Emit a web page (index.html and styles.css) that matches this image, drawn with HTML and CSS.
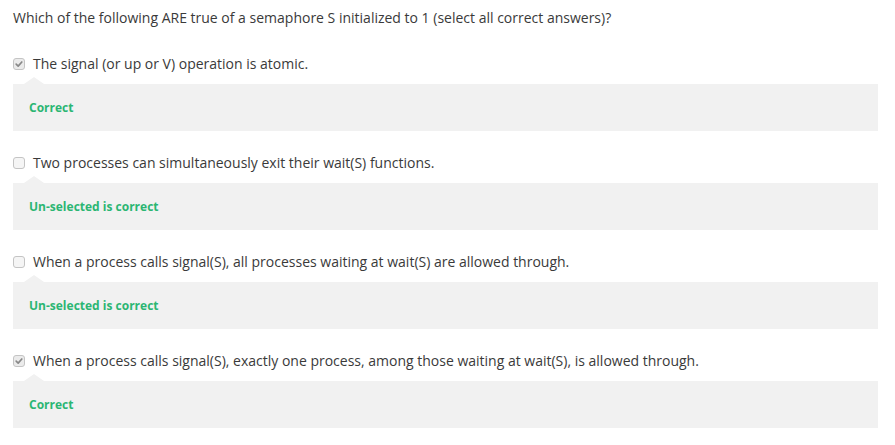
FILE: index.html
```html
<!DOCTYPE html>
<html>
<head>
<meta charset="utf-8">
<link rel="stylesheet" href="styles.css">
</head>
<body>
<div class="quiz">
  <div class="question">Which of the following ARE true of a semaphore S initialized to 1 (select all correct answers)?</div>

  <div class="option">
    <div class="choice">
      <span class="cb checked"><svg viewBox="0 0 12 12" width="12" height="12"><path d="M2.6 6.2 L5 8.5 L9.4 3.6" fill="none" stroke="#888888" stroke-width="2" stroke-linecap="round" stroke-linejoin="round"/></svg></span>
      <span class="label">The signal (or up or V) operation is atomic.</span>
    </div>
    <div class="feedback"><span>Correct</span></div>
  </div>

  <div class="option">
    <div class="choice">
      <span class="cb"></span>
      <span class="label">Two processes can simultaneously exit their wait(S) functions.</span>
    </div>
    <div class="feedback"><span>Un-selected is correct</span></div>
  </div>

  <div class="option">
    <div class="choice">
      <span class="cb"></span>
      <span class="label">When a process calls signal(S), all processes waiting at wait(S) are allowed through.</span>
    </div>
    <div class="feedback"><span>Un-selected is correct</span></div>
  </div>

  <div class="option">
    <div class="choice">
      <span class="cb checked"><svg viewBox="0 0 12 12" width="12" height="12"><path d="M2.6 6.2 L5 8.5 L9.4 3.6" fill="none" stroke="#888888" stroke-width="2" stroke-linecap="round" stroke-linejoin="round"/></svg></span>
      <span class="label">When a process calls signal(S), exactly one process, among those waiting at wait(S), is allowed through.</span>
    </div>
    <div class="feedback"><span>Correct</span></div>
  </div>
</div>
</body>
</html>
```

FILE: styles.css
```css
html, body {
  margin: 0;
  padding: 0;
  background: #ffffff;
}
body {
  font-family: "Open Sans", "Liberation Sans", sans-serif;
  color: #3a3a3a;
  font-size: 14px;
  line-height: 20px;
}
.quiz {
  padding: 8px 17px 0 13px;
}
.question {
  margin-bottom: 26px;
}
.option {
  margin-bottom: 22px;
}
.choice {
  display: flex;
  align-items: center;
  height: 20px;
}
.cb {
  box-sizing: border-box;
  width: 12px;
  height: 12px;
  border: 1px solid #c4c4c4;
  border-radius: 3px;
  background: #f5f5f5;
  margin-right: 8px;
  display: flex;
  align-items: center;
  justify-content: center;
  flex: none;
}
.cb svg {
  display: block;
  width: 10px;
  height: 10px;
}
.cb.checked {
  background: #ebebeb;
}
.feedback {
  position: relative;
  margin-top: 10px;
  height: 47px;
  background: #f1f1f1;
  display: flex;
  align-items: center;
  padding-left: 16px;
}
.feedback::before {
  content: "";
  position: absolute;
  left: 11px;
  top: -7px;
  width: 0;
  height: 0;
  border-left: 10px solid transparent;
  border-right: 10px solid transparent;
  border-bottom: 7px solid #f1f1f1;
}
.feedback span {
  font-size: 12px;
  font-weight: 700;
  color: #2bb673;
  line-height: 16px;
}
```
